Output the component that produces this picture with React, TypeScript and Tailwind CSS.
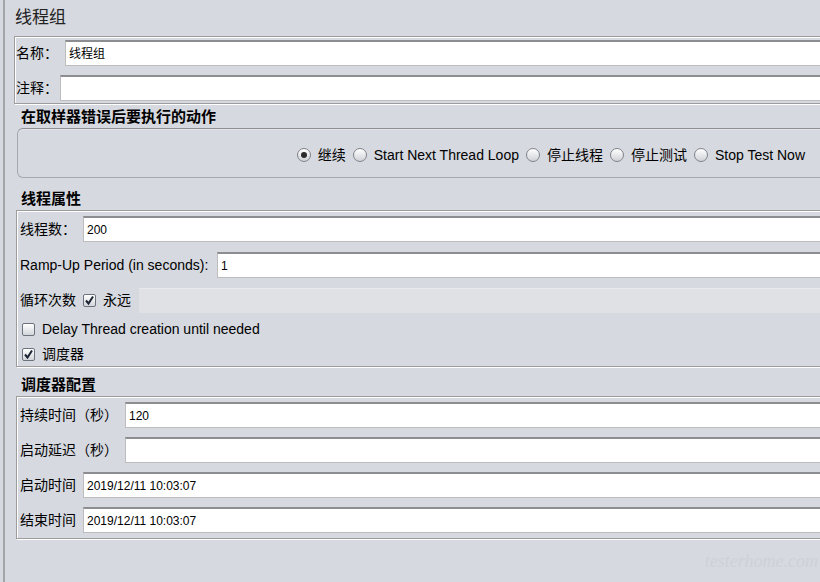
import React from "react"

const FONT = { fontFamily: '"Liberation Sans", "Noto Sans CJK SC", sans-serif' }

function TextField({ value = "", disabled = false }: { value?: string; disabled?: boolean }) {
  return (
    <div
      className={
        disabled
          ? "flex-1 h-[25px] bg-[#dfe1e5] border-t border-[#e8e9ec]"
          : "flex-1 h-[26px] bg-white border border-[#bdbdbd] border-t-2 border-t-[#8c8d90] flex items-center pl-[3px] text-[12px] text-black"
      }
    >
      {value}
    </div>
  )
}

function Radio({ checked = false }: { checked?: boolean }) {
  return (
    <span className="w-[14px] h-[14px] rounded-full border border-[#7f8288] bg-gradient-to-b from-[#ffffff] to-[#cfd2d6] flex items-center justify-center shrink-0">
      {checked && <span className="w-[6px] h-[6px] rounded-full bg-[#2b2b2b]" />}
    </span>
  )
}

function Checkbox({ checked = false }: { checked?: boolean }) {
  return (
    <span className="w-[13px] h-[13px] rounded-[2px] border border-[#6d737c] bg-gradient-to-b from-[#ffffff] to-[#d3d6da] flex items-center justify-center shrink-0">
      {checked && (
        <svg width="11" height="11" viewBox="0 0 11 11">
          <path d="M2 5.5 L4.5 8.5 L9 1.5" fill="none" stroke="#1c2433" strokeWidth="2" />
        </svg>
      )}
    </span>
  )
}

function Box({ className, children }: { className: string; children: React.ReactNode }) {
  return (
    <div
      className={`border border-[#9c9c9c] shadow-[inset_1px_1px_0_#ffffff,1px_1px_0_#ffffff] ${className}`}
    >
      {children}
    </div>
  )
}

function Heading({ text, className }: { text: string; className: string }) {
  return <div className={`pl-[7px] text-[15px] font-bold leading-[18px] text-black ${className}`}>{text}</div>
}

export default function App() {
  return (
    <div className="w-[820px] h-[582px] overflow-hidden bg-[#d6d9df] pl-[3px] relative" style={FONT}>
      <div className="h-full border-l-2 border-[#a3a5a9] pl-[9px] text-[14px] text-black">
        {/* Title */}
        <div className="pt-[8px] pl-[1px] text-[17px] leading-[20px] text-[#222]">线程组</div>

        {/* Name / comment */}
        <Box className="mt-[8px] -mr-[20px] pt-[3px] pb-[2px] flex flex-col gap-[9px]">
          <div className="flex items-center">
            <span className="w-[50px] pl-[1px] text-[14px]">名称：</span>
            <TextField value="线程组" />
          </div>
          <div className="flex items-center">
            <span className="w-[45px] pl-[1px] text-[14px]">注释：</span>
            <TextField />
          </div>
        </Box>

        {/* Sampler error action */}
        <Heading text="在取样器错误后要执行的动作" className="mt-[4px]" />
        <div className="mt-[2px] ml-[3px] -mr-[20px] h-[50px] rounded-[6px] border border-[#a6a8ac] border-t-[#8d8f93] shadow-[inset_0_1px_0_#e4e6ea] flex items-center justify-end pr-[34px] pt-[4px]">
          <div className="flex items-center gap-[7px]">
            <Radio checked />
            <span>继续</span>
            <Radio />
            <span>Start Next Thread Loop</span>
            <Radio />
            <span>停止线程</span>
            <Radio />
            <span>停止测试</span>
            <Radio />
            <span>Stop Test Now</span>
          </div>
        </div>

        {/* Thread properties */}
        <Heading text="线程属性" className="mt-[12px]" />
        <Box className="mt-[2px] ml-[2px] -mr-[20px] h-[157px] pt-[5px] pl-[3px] flex flex-col">
          <div className="flex items-center">
            <span className="w-[63px]">线程数：</span>
            <TextField value="200" />
          </div>
          <div className="flex items-center mt-[10px]">
            <span className="w-[197px]">Ramp-Up Period (in seconds):</span>
            <TextField value="1" />
          </div>
          <div className="flex items-center mt-[10px] h-[24px]">
            <span className="w-[63px]">循环次数</span>
            <Checkbox checked />
            <span className="ml-[7px] w-[36px]">永远</span>
            <TextField disabled />
          </div>
          <div className="flex items-center mt-[6px] h-[24px] pl-[2px]">
            <Checkbox />
            <span className="ml-[7px]">Delay Thread creation until needed</span>
          </div>
          <div className="flex items-center mt-[1px] h-[24px] pl-[2px]">
            <Checkbox checked />
            <span className="ml-[7px]">调度器</span>
          </div>
        </Box>

        {/* Scheduler config */}
        <Heading text="调度器配置" className="mt-[9px]" />
        <Box className="mt-[2px] ml-[2px] -mr-[20px] pt-[5px] pb-[5px] pl-[3px] flex flex-col gap-[9px]">
          <div className="flex items-center">
            <span className="w-[105px]">持续时间（秒）</span>
            <TextField value="120" />
          </div>
          <div className="flex items-center">
            <span className="w-[105px]">启动延迟（秒）</span>
            <TextField />
          </div>
          <div className="flex items-center">
            <span className="w-[63px]">启动时间</span>
            <TextField value="2019/12/11 10:03:07" />
          </div>
          <div className="flex items-center">
            <span className="w-[63px]">结束时间</span>
            <TextField value="2019/12/11 10:03:07" />
          </div>
        </Box>
      </div>

      {/* watermark */}
      <div className="absolute right-[2px] bottom-[7px] text-[18px] italic text-[#ced1d7]" style={{ fontFamily: '"Liberation Serif", serif' }}>
        testerhome.com
      </div>
    </div>
  )
}
